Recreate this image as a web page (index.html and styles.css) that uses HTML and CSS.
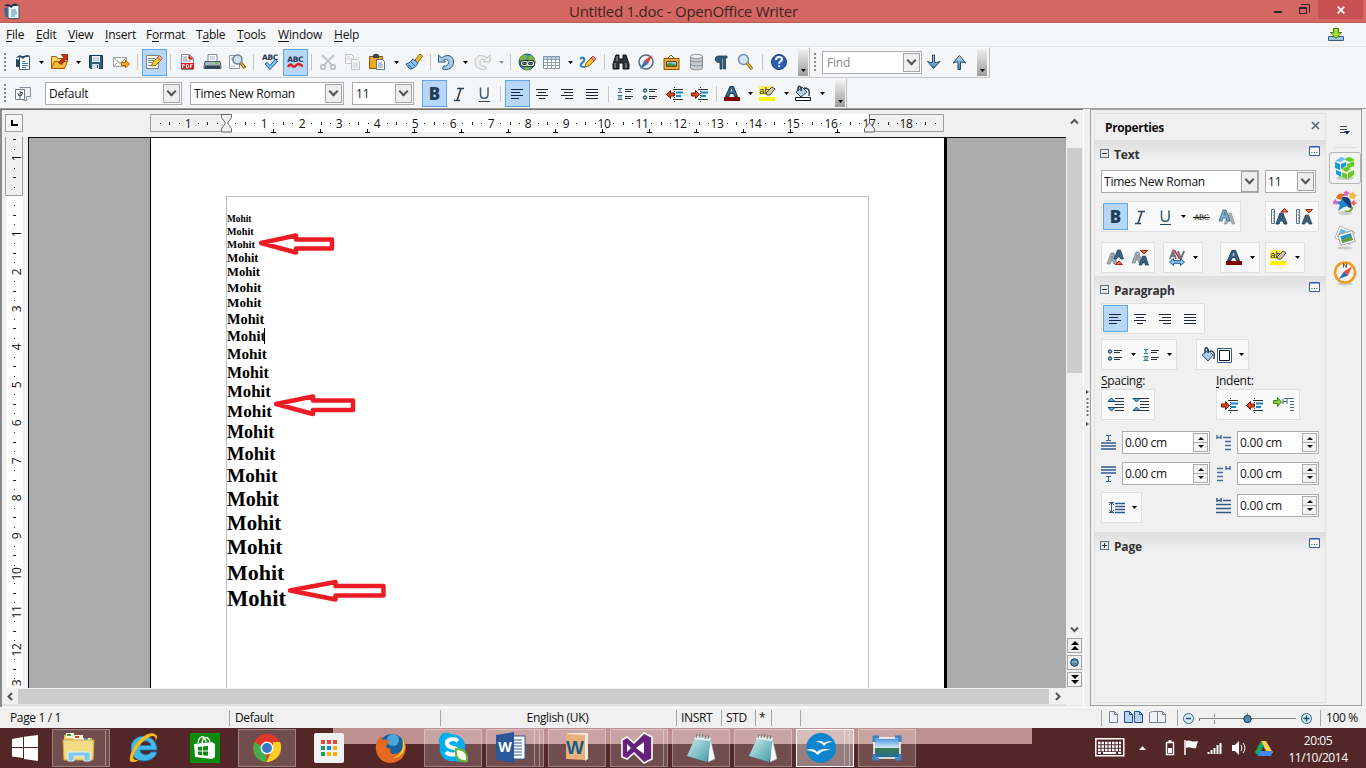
FILE: index.html
```html
<!DOCTYPE html>
<html lang="en">
<head>
<meta charset="utf-8">
<title>Untitled 1.doc - OpenOffice Writer</title>
<link rel="stylesheet" href="styles.css">
</head>
<body>
<svg class="defs" width="0" height="0">
<defs>
<linearGradient id="gBlue" x1="0" y1="0" x2="0" y2="1"><stop offset="0" stop-color="#c5e1f5"/><stop offset="1" stop-color="#3c7fb5"/></linearGradient>
<linearGradient id="gGold" x1="0" y1="0" x2="0" y2="1"><stop offset="0" stop-color="#ffe08a"/><stop offset="1" stop-color="#f0a91c"/></linearGradient>
<linearGradient id="gNote" x1="0" y1="0" x2="1" y2="1"><stop offset="0" stop-color="#d8f2f2"/><stop offset="1" stop-color="#3b9aa5"/></linearGradient>
<linearGradient id="gSky" x1="0" y1="0" x2="0" y2="1"><stop offset="0" stop-color="#3e8fd8"/><stop offset=".5" stop-color="#d8ecf8"/><stop offset=".52" stop-color="#3c7a50"/><stop offset="1" stop-color="#1d6a9c"/></linearGradient>
</defs>
<symbol id="doc" viewBox="0 0 25 24"><path d="M8.500 6.500h10v13h-10z" fill="#fff" stroke="#3c5d75"/><path d="M5 8c3-4 5-3 7-1 2-2 4-3 7-1-3 0-5 1-7 3-2-2-4-2-7-1zM5 17V9l4 1v7z" fill="#27485f"/><path d="M11 11.500h3M11 13.500h6M11 15.500h6M11 17.500h4" stroke="#4179aa"/></symbol>
<symbol id="open" viewBox="0 0 25 24"><path d="M4.500 18.500v-12h5l1 2h7v10z" fill="url(#gGold)" stroke="#a65e00"/><path d="M4.500 18.500l3-7h13l-3 7z" fill="#f8bd40" stroke="#a65e00"/><path d="M11.500 12.500l5-5-2-3h6v6l-2-1-4 5z" fill="#c8320f" stroke="#7c1900" stroke-width=".8"/></symbol>
<symbol id="save" viewBox="0 0 25 24"><path d="M5.500 5.500h13v13h-12l-1-1z" fill="#315a77" stroke="#183b55"/><path d="M8 6h8v6H8z" fill="#eef4f7"/><path d="M8 14h7v5H8z" fill="#d3e0e8"/><path d="M13 15h1v3h-1z" fill="#234"/><path d="M9 8h6M9 10h6" stroke="#9ab7c9"/></symbol>
<symbol id="mail" viewBox="0 0 25 24"><path d="M4.500 7.500h13v9h-13z" fill="#f6f6f3" stroke="#a1a69f"/><path d="M4.500 7.500l6.500 6 6.500-6M4.500 16.500l4-4M17.500 16.500l-4-4" fill="none" stroke="#969c99"/><path d="M12.500 12.500h4V10l4 4-4 4v-2.500h-4z" fill="#ffa91e" stroke="#b66400"/></symbol>
<symbol id="edit" viewBox="0 0 25 24"><path d="M4.500 5.500h12v13h-12z" fill="#fff" stroke="#788690"/><path d="M6 8.500h7M6 10.500h6M6 12.500h4M6 15.500h8" stroke="#7a8995"/><path d="M9.500 16l1-3.500 6-6 3 3-6 6z" fill="#f7c92d" stroke="#6b5107" stroke-width=".8"/><path d="M15.500 7.500l2-2 3 3-2 2z" fill="#f4a4a4" stroke="#b23d3d" stroke-width=".8"/></symbol>
<symbol id="pdf" viewBox="0 0 25 24"><path d="M6.500 4.500h8l4 4v11h-12z" fill="#fff" stroke="#7d8a94"/><path d="M14 5v4h4" fill="#d52b2b" stroke="#b51f1f"/><path d="M8 7h4M8 9h4M8 11h8" stroke="#83919c"/><path d="M6 13h13v6H6z" fill="#e3191b"/><path d="M7.500 18v-3.500h1.700v1.700H7.500M11.500 18v-3.500h1.400l.8 1v1.500l-.8 1zM15.500 18v-3.500h2M15.500 16.200h1.500" fill="none" stroke="#fff" stroke-width=".9"/></symbol>
<symbol id="print" viewBox="0 0 25 24"><path d="M8 4.500h9v9H8z" fill="#fff" stroke="#7d8c96"/><path d="M10 7h5M10 9h5" stroke="#a3b0ba"/><path d="M5 11.500h15l1 5v2H4v-2z" fill="#a9b5bd" stroke="#485a66"/><path d="M5 15.500h15v3H5z" fill="#314553"/><path d="M15 13h3" stroke="#5bc72a" stroke-width="1.500"/></symbol>
<symbol id="preview" viewBox="0 0 25 24"><path d="M4.500 5.500h10v13h-10z" fill="#fff" stroke="#87949d"/><path d="M6 8h5M6 10h3M6 16h4" stroke="#9ca8b1"/><circle cx="12.500" cy="9.500" r="4.500" fill="#cbe2f5" stroke="#6a7f90" stroke-width="1.500"/><path d="M16 13l4 5" stroke="#7b4b00" stroke-width="3"/><path d="M16 13l3.500 4.500" stroke="#f1b12f" stroke-width="1.500"/></symbol>
<symbol id="cut" viewBox="0 0 25 24"><path d="M6 5l10 10M18 5L8 15" stroke="#c3c5c7" stroke-width="2"/><circle cx="7" cy="17" r="2.200" fill="none" stroke="#bcbebf" stroke-width="1.800"/><circle cx="17" cy="17" r="2.200" fill="none" stroke="#bcbebf" stroke-width="1.800"/></symbol>
<symbol id="copy" viewBox="0 0 25 24"><path d="M4.500 4.500h6l2 2v7h-8z" fill="#f5f5f5" stroke="#c3c5c7"/><path d="M10.500 9.500h6l2 2v8h-8z" fill="#f5f5f5" stroke="#bfc1c3"/><path d="M6 7h3M6 9h5M12 13h4M12 15h5M12 17h5" stroke="#cbcdcf"/></symbol>
<symbol id="paste" viewBox="0 0 25 24"><path d="M3.500 6.500h13v12h-13z" fill="#f0a81d" stroke="#85550a"/><path d="M7 6c0-3 6-3 6 0v2H7z" fill="#37454e"/><path d="M10.500 9.500h6l2 2v8h-8z" fill="#fff" stroke="#57738a"/><path d="M12 13h4M12 15h5M12 17h5" stroke="#6c8ba3"/></symbol>
<symbol id="brush" viewBox="0 0 25 24"><path d="M13 10l5-6 2.500 2-5 7z" fill="#f7b933" stroke="#9a5d00"/><path d="M4 14c4-1 6-4 7-5l5 4c-2 4-5 6-8 6-1-1-3-3-4-5z" fill="#8bc4f2" stroke="#1f5691"/><path d="M6 15l4 3M9 12l4 4" stroke="#2a65a5"/></symbol>
<symbol id="undo" viewBox="0 0 25 24"><path d="M3.500 5v7h7l-2-2c3-1.500 5 0 5 2.500s-2 4-5 3.500l-1 3c6 1.500 11-1 11-7 0-6-6-9-12-4z" fill="#a7ccec" stroke="#2a5a87"/></symbol>
<symbol id="redo" viewBox="0 0 25 24"><path d="M19 5v7h-7l2-2c-3-1.500-5 0-5 2.500s2 4 5 3.500l1 3c-6 1.500-11-1-11-7 0-6 6-9 12-4z" fill="#ededee" stroke="#c2c4c6"/></symbol>
<symbol id="link" viewBox="0 0 25 24"><circle cx="12" cy="12" r="8" fill="#478ec4" stroke="#1c4f77"/><path d="M6 6c3-3 6-1 6 1s-4 5-6 4-2-3 0-5zM14 6c2-2 5 1 6 4s-3 4-5 2-3-4-1-6zM8 18c3-2 7-1 8 1-3 2-6 1-8-1z" fill="#7cb53a"/><rect x="6.500" y="11.500" width="6" height="4" rx="2" fill="none" stroke="#24341a" stroke-width="2.800"/><rect x="12.500" y="11.500" width="6" height="4" rx="2" fill="none" stroke="#24341a" stroke-width="2.800"/><rect x="6.500" y="11.500" width="6" height="4" rx="2" fill="none" stroke="#eef5df" stroke-width="1.200"/><rect x="12.500" y="11.500" width="6" height="4" rx="2" fill="none" stroke="#eef5df" stroke-width="1.200"/></symbol>
<symbol id="table" viewBox="0 0 25 24"><path d="M3.500 6.500h16v12h-16z" fill="#fff" stroke="#8093a3"/><path d="M4 7h15v2H4z" fill="#b9d5ef"/><path d="M4 9.500h16M4 12.500h16M4 15.500h16M7.500 6v13M11.500 6v13M15.500 6v13" stroke="#8da0b0"/></symbol>
<symbol id="draw" viewBox="0 0 25 24"><path d="M4 9c3-3 6 0 3 3s-4 5 2 5" fill="none" stroke="#2d80cc" stroke-width="2"/><path d="M9 17l1-4 6-6 3 3-6 6z" fill="#f7c22c" stroke="#6e4a00" stroke-width=".8"/><path d="M15 8l2-2 3 3-2 2z" fill="#ef8f8f" stroke="#a83a3a" stroke-width=".8"/></symbol>
<symbol id="binoc" viewBox="0 0 25 24"><path d="M7 5h3v4h4V5h3l3 9v5h-6v-6h-4v6H4v-5z" fill="#2c3136" stroke="#101315"/><path d="M6 13v5M17 13v5M8 6v5" stroke="#9ba5ad"/></symbol>
<symbol id="compass" viewBox="0 0 25 24"><circle cx="12" cy="12" r="7" fill="#eaf3fb" stroke="#566b7b" stroke-width="1.500"/><path d="M18 5l-4 9-3.500-3.500z" fill="#e8372c"/><path d="M6 19l4.500-8.500L14 14z" fill="#2e71c4"/></symbol>
<symbol id="gallery" viewBox="0 0 25 24"><path d="M8 9l4-4 4 4" fill="none" stroke="#8a5a14"/><path d="M5 8.500h15v11H5z" fill="#efae3b" stroke="#8d5200"/><path d="M7.500 11.500h10v5h-10z" fill="#8bcbf0" stroke="#704307"/><path d="M8 16v-2c3-2 5-1 9 1v1z" fill="#42963a"/></symbol>
<symbol id="db" viewBox="0 0 25 24"><path d="M6.500 6v12c0 2.500 12 2.500 12 0V6" fill="#c6cdd2" stroke="#84909a"/><ellipse cx="12.500" cy="6.500" rx="6" ry="2.200" fill="#eef1f3" stroke="#84909a"/><path d="M6.500 10c0 2.500 12 2.500 12 0M6.500 14c0 2.500 12 2.500 12 0" fill="none" stroke="#7f8b95"/></symbol>
<symbol id="para" viewBox="0 0 25 24"><path d="M18 6h-8c-5 0-5 6.500 0 6.500h1v6.500h2V8h1.500v11h2V8H18z" fill="#2e5f85" stroke="#18384f" stroke-width=".8"/></symbol>
<symbol id="zoom" viewBox="0 0 25 24"><circle cx="9.500" cy="9.500" r="5" fill="#cfe6f8" stroke="#7390a9" stroke-width="1.500"/><path d="M13 13l5 6" stroke="#8a5200" stroke-width="3"/><path d="M13 13l4.600 5.400" stroke="#f2b43a" stroke-width="1.600"/></symbol>
<symbol id="help" viewBox="0 0 25 24"><circle cx="12" cy="12" r="7.500" fill="#2b5fb5" stroke="#153a78"/><path d="M9 10c0-4 6-4 6-.8 0 2.200-2.800 2-2.800 4.500M12.200 15.300v2" fill="none" stroke="#fff" stroke-width="2"/></symbol>
<symbol id="down" viewBox="0 0 25 24"><path d="M10.500 5h2v7.500h2l3.500-1-6.500 7-6-7 3 1h2z" fill="url(#gBlue)" stroke="#274b66"/></symbol>
<symbol id="up" viewBox="0 0 25 24"><path d="M11 19.500h2.500V12h1.500l3.500 1-6-7.500L6 13l3-1h2z" fill="url(#gBlue)" stroke="#274b66"/></symbol>
<symbol id="stylist" viewBox="0 0 25 24"><path d="M8.500 5.500h11v9l-4 4h-3" fill="#eef1f3" stroke="#86939e"/><path d="M19.500 14.500h-4v4" fill="#fff" stroke="#86939e"/><path d="M4.500 7.500h9v10h-9z" fill="#fff" stroke="#6c7c88"/><path d="M6.500 12h5v-1.500H9V9M7.500 12v1.500h3V12M9 13.500V17" fill="none" stroke="#3f5260"/></symbol>
<symbol id="italic" viewBox="0 0 25 24"><path d="M10 6.500h7M7 18.500h6M14 6.500l-4 12" fill="none" stroke="#27455c" stroke-width="1.600"/></symbol>
<symbol id="under" viewBox="0 0 25 24"><path d="M8.500 5.500v7c0 5 7.500 5 7.500 0v-7" fill="none" stroke="#3c5c74" stroke-width="1.500"/><path d="M7 19.500h11" stroke="#27455c"/></symbol>
<symbol id="left" viewBox="0 0 25 24"><path d="M6 7.500h12M6 10.500h9M6 13.500h12M6 16.500h8" stroke="#1c2733"/></symbol>
<symbol id="center" viewBox="0 0 25 24"><path d="M6 7.500h12M8 10.500h8M6 13.500h12M9 16.500h6" stroke="#1c2733"/></symbol>
<symbol id="right" viewBox="0 0 25 24"><path d="M6 7.500h12M9 10.500h9M6 13.500h12M10 16.500h8" stroke="#1c2733"/></symbol>
<symbol id="just" viewBox="0 0 25 24"><path d="M6 7.500h12M6 10.500h12M6 13.500h12M6 16.500h12" stroke="#1c2733"/></symbol>
<symbol id="num" viewBox="0 0 25 24"><path d="M5 6.500h4M7 6.500v4M5 10.500h4M4.500 13.500h5M6 13.500v4M8 13.500v4M4.500 17.500h5" stroke="#3a7999"/><path d="M12 7.500h8M12 9.500h6M12 14.500h8M12 16.500h6" stroke="#26313a"/></symbol>
<symbol id="bul" viewBox="0 0 25 24"><circle cx="7" cy="8.500" r="1.700" fill="#74b5d4" stroke="#143d55"/><circle cx="7" cy="15.500" r="1.700" fill="#74b5d4" stroke="#143d55"/><path d="M11 7.500h8M11 9.500h6M11 14.500h8M11 16.500h6" stroke="#26313a"/></symbol>
<symbol id="dec" viewBox="0 0 25 24"><path d="M10 7.500h10M10 17.500h10" stroke="#28333b"/><path d="M11.500 5v15" stroke="#28333b" stroke-dasharray="1 1"/><path d="M13 10.500h7M13 14h5" stroke="#1687c8" stroke-width="2"/><path d="M3.500 12.500l4-4V11h4v3h-4v2.500z" fill="#d04a25" stroke="#791600"/></symbol>
<symbol id="inc" viewBox="0 0 25 24"><path d="M10 7.500h10M10 17.500h10" stroke="#28333b"/><path d="M12.500 5v15" stroke="#28333b" stroke-dasharray="1 1"/><path d="M13 10.500h7M13 14h5" stroke="#1687c8" stroke-width="2"/><path d="M11.500 12.500l-4-4V11h-4v3h4v2.500z" fill="#d04a25" stroke="#791600"/></symbol>
<symbol id="fontcolor" viewBox="0 0 25 24"><path d="M5.500 14.500L10 4.500h3.500l4 10h-3l-1-3h-3.500l-1 3z" fill="#366384" stroke="#1e3a50"/><path d="M10.500 9.500l1-3 1 3z" fill="#e2eaf0"/><path d="M4 15h16v4H4z" fill="#800000"/></symbol>
<symbol id="aa" viewBox="0 0 25 24"><path d="M10 19l5-11h2l4 11h-3l-1-3h-3l-1 3z" fill="#a9b0b6" stroke="#878f96" stroke-width=".6"/><path d="M5 16l4-11h3l4 11h-3l-1-3H9l-1 3zM10 10h1.500l-.7-3z" fill="#7cb0d2" stroke="#3b6482" stroke-width=".8" fill-rule="evenodd"/></symbol>
<symbol id="growA" viewBox="0 0 25 24"><path d="M4.500 4.500h3v14h-3zM6 7h2M6 10h2M6 13h2M6 16h2" fill="#eef3f7" stroke="#5c7488"/><path d="M9 19l4-11h3l4 11h-3l-1-3h-3l-1 3zM13.500 13.500h2l-1-3z" fill="#3b6484" stroke="#1e394e" stroke-width=".9" fill-rule="evenodd"/><path d="M14 7l3.500-3.500L21 7z" fill="#f26b41" stroke="#a22c0d"/></symbol>
<symbol id="shrinkA" viewBox="0 0 25 24"><path d="M4.500 4.500h3v14h-3zM6 7h2M6 10h2M6 13h2M6 16h2" fill="#eef3f7" stroke="#5c7488"/><path d="M10 19l3.500-9h3l3.500 9h-3l-.6-2h-3l-.6 2zM14.500 15h2l-1-2z" fill="#3b6484" stroke="#1e394e" stroke-width=".7" fill-rule="evenodd"/><path d="M13.500 4.500L17 8l3.500-3.500z" fill="#f26b41" stroke="#a22c0d"/></symbol>
<symbol id="supA" viewBox="0 0 25 24"><path d="M4 18l4-11h3l3 11h-3l-1-3H8l-1 3zM8.500 13h1.500l-.8-3z" fill="#a3abb1" stroke="#707d86" stroke-width=".7" fill-rule="evenodd"/><path d="M11 13l3.500-9h3l3 9h-3l-.5-2h-2.500l-.6 2zM15 9h1.600l-.8-2.500z" fill="#3b6484" stroke="#1e394e" stroke-width=".7" fill-rule="evenodd"/><path d="M12.500 18.500L16 15l3.500 3.500z" fill="#f26b41" stroke="#a22c0d"/></symbol>
<symbol id="subA" viewBox="0 0 25 24"><path d="M4 17l4-11h3l3 11h-3l-1-3H8l-1 3zM8.500 12h1.500l-.8-3z" fill="#a3abb1" stroke="#707d86" stroke-width=".7" fill-rule="evenodd"/><path d="M11 19l3.500-9h3l3 9h-3l-.5-2h-2.500l-.6 2zM15 15h1.600l-.8-2.500z" fill="#3b6484" stroke="#1e394e" stroke-width=".7" fill-rule="evenodd"/><path d="M12.500 4.500L16 8l3.500-3.500z" fill="#f26b41" stroke="#a22c0d"/></symbol>
<symbol id="kern" viewBox="0 0 25 24"><path d="M5 13l3-8 3 8M6 10h4M13 5l3 8 3-8" fill="none" stroke="#6b7780" stroke-width="2"/><path d="M9.500 4l5 9" stroke="#d81e2b" stroke-width="1.500"/><path d="M4.500 16l4-3.500v2.200h7v-2.200l4 3.500-4 3.500v-2.200h-7v2.200z" fill="#8ec6ee" stroke="#1f5c96"/></symbol>
<symbol id="bucket" viewBox="0 0 32 24"><path d="M1 12l6-5 5 5-5 6z" fill="#a9ccec" stroke="#2d5680"/><path d="M4 10V6c1-3 4-1 3 4M9 8c4 0 5 2 4 8" fill="none" stroke="#263b4a" stroke-width="1.500"/><path d="M16.500 5.500h14v14h-14z" fill="#fff" stroke="#2f5c91"/><path d="M18.500 7.500h10v10h-10z" fill="#fff" stroke="#111"/></symbol>
<symbol id="spInc" viewBox="0 0 25 24"><path d="M12 5.500h9M12 8.500h9M12 11.500h9M12 14.500h9M12 17.500h9" stroke="#26384a"/><path d="M5 8.500L8.500 5 12 8.500zM5 14.500L8.500 18l3.500-3.500z" fill="#66aadd" stroke="#17476e"/></symbol>
<symbol id="spDec" viewBox="0 0 25 24"><path d="M12 5.500h9M12 8.500h9M12 11.500h9M12 14.500h9M12 17.500h9" stroke="#26384a"/><path d="M5 5.500L8.500 9 12 5.500zM5 17.500L8.500 14l3.500 3.500z" fill="#66aadd" stroke="#17476e"/></symbol>
<symbol id="hang" viewBox="0 0 25 24"><path d="M2.500 7.500h4v-3l4 4.500-4 4.500v-3h-4z" fill="#86d34a" stroke="#3b7d12"/><path d="M12 8.500h4M12 6v5M16 6v5M13 5.500h10M19 8.500h4M19 11.500h4M19 14.500h4M19 17.500h4" stroke="#4b6a9d"/></symbol>
<symbol id="above" viewBox="0 0 16 18"><path d="M5 1.500h5M7.500 1.500v5M5 6.500h5" stroke="#3c649d"/><path d="M0 9h15M0 12h15M0 15h15" stroke="#35588a" stroke-width="1.600"/></symbol>
<symbol id="below" viewBox="0 0 16 18"><path d="M5 11.500h5M7.500 11.500v5M5 16.500h5" stroke="#3c649d"/><path d="M0 2h15M0 5h15M0 8h15" stroke="#35588a" stroke-width="1.600"/></symbol>
<symbol id="before" viewBox="0 0 16 18"><path d="M1 1v4M5 1v4M1 3.500h4M7 3.500h8M9 7.500h6M9 11.500h6M9 15.500h6" stroke="#466a9c" stroke-width="1.400"/></symbol>
<symbol id="after" viewBox="0 0 16 18"><path d="M10 1v4M14 1v4M10 3.500h4M1 3.500h6M1 7.500h6M1 11.500h6M1 15.500h6" stroke="#466a9c" stroke-width="1.400"/></symbol>
<symbol id="first" viewBox="0 0 16 18"><path d="M1 1v4M5 1v4M1 3.500h4M7 3.500h8M0 7.500h15M0 11.500h15M0 15.500h15" stroke="#35588a" stroke-width="1.500"/></symbol>
<symbol id="lsp" viewBox="0 0 25 24"><path d="M5 6.500h5M5 16.500h5M7.500 6v11" stroke="#2a5f9b"/><path d="M5 9l2.500-2.500L10 9M5 14l2.500 2.500L10 14" fill="none" stroke="#2a5f9b"/><path d="M11 7.500h10M11 10.500h10M11 13.500h10M11 16.500h10" stroke="#33598c" stroke-width="1.500"/></symbol>
<symbol id="more" viewBox="0 0 11 10"><path d="M.5.500h10v9H.5z" fill="#fff" stroke="#3b5f9e"/><path d="M1 1.500h9" stroke="#7fa8dc"/><path d="M2.500 6.500h1M5 6.500h1M7.500 6.500h1" stroke="#24457c"/></symbol>
<symbol id="notepad" viewBox="0 0 32 32"><path d="M25 5l5 22-7 3z" fill="#f5fafa" stroke="#93b3b8" stroke-width=".5"/><path d="M11 4l15 2-4 24-20-6z" fill="url(#gNote)"/><path d="M11 4l15 2-1 3-16-2z" fill="#e9f1ee"/><path d="M11 6l1-4M14 6l1-4M17 6l1-4M20 7l1-4M23 7l1-4" stroke="#6d7774"/></symbol>
<symbol id="arr" viewBox="0 0 5 3"><path d="M0 0h5L2.500 3z" fill="#000"/></symbol>
</svg>

<header class="title"><svg class="appicon" width="18" height="18"><path d="M5 3.500h11v13H5z" fill="#eef7fb" stroke="#36576b"/><path d="M1 4c3-3 5-2 7 0 2-3 5-3 7-1-3 0-5 1-7 3-2-2-4-2-7-2z" fill="#1c3b4c"/><path d="M1 6h4v9H2z" fill="#486a7d"/><path d="M8 8h5M8 10h6M8 12h6M8 14h4" stroke="#4e8db4"/></svg><span class="caption">Untitled 1.doc - OpenOffice Writer</span>
<svg class="winctl" width="62" height="23"><path d="M0 12h8" stroke="#2e2626" stroke-width="2"/><path d="M25.500 7.500h7v6h-7zM25 8.500h8" fill="none" stroke="#2e2626"/><path d="M27 4.500h8.500v8" fill="none" stroke="#2e2626"/></svg><span class="close"><svg width="8" height="8"><path d="M.7.700l6.600 6.600M7.300.700L.7 7.300" stroke="#fff" stroke-width="1.800"/></svg></span></header>

<nav class="menu"><span class="m1"><u>F</u>ile</span><span class="m2"><u>E</u>dit</span><span class="m3"><u>V</u>iew</span><span class="m4"><u>I</u>nsert</span><span class="m5">F<u>o</u>rmat</span><span class="m6">T<u>a</u>ble</span><span class="m7"><u>T</u>ools</span><span class="m8"><u>W</u>indow</span><span class="m9"><u>H</u>elp</span>
<svg class="update" width="16" height="14"><path d="M.5 8.500h15v4H.5z" fill="#9cc3df" stroke="#35607e"/><path d="M5.500.500h5v4h3L8 10.500 2.500 4.500h3z" fill="#a8d92f" stroke="#3f7d06"/></svg></nav>

<div class="bar bar1">
<div class="strip s1"><i class="grip"></i>
<i class="b"><svg><use href="#doc"/></svg></i><i class="a"><svg><use href="#arr"/></svg></i><i class="b"><svg><use href="#open"/></svg></i><i class="a wide"><svg><use href="#arr"/></svg></i><i class="b"><svg><use href="#save"/></svg></i><i class="b"><svg><use href="#mail"/></svg></i><i class="s"></i><i class="b on"><svg><use href="#edit"/></svg></i><i class="s"></i><i class="b"><svg><use href="#pdf"/></svg></i><i class="b"><svg><use href="#print"/></svg></i><i class="b"><svg><use href="#preview"/></svg></i><i class="s"></i><i class="b"><svg viewBox="0 0 25 24"><text x="12" y="9.500" class="ic-abc">ABC</text><path d="M7 14l2-1.500 3 3 5-6 2.500 2-7.500 8z" fill="#7cc4f5" stroke="#1e5b96"/></svg></i><i class="b on"><svg viewBox="0 0 25 24"><text x="12.200" y="11.500" class="ic-abc">ABC</text><path d="M5 17q2-4 4-1.500t4 0 4-1 3 1.500" fill="none" stroke="#e21b1b" stroke-width="2.400"/></svg></i><i class="s"></i><i class="b"><svg><use href="#cut"/></svg></i><i class="b"><svg><use href="#copy"/></svg></i><i class="b"><svg><use href="#paste"/></svg></i><i class="a"><svg><use href="#arr"/></svg></i><i class="b"><svg><use href="#brush"/></svg></i><i class="s"></i><i class="b"><svg><use href="#undo"/></svg></i><i class="a"><svg><use href="#arr"/></svg></i><i class="b"><svg><use href="#redo"/></svg></i><i class="a dim"><svg><use href="#arr"/></svg></i><i class="s"></i><i class="b"><svg><use href="#link"/></svg></i><i class="b"><svg><use href="#table"/></svg></i><i class="a"><svg><use href="#arr"/></svg></i><i class="b"><svg><use href="#draw"/></svg></i><i class="s"></i><i class="b"><svg><use href="#binoc"/></svg></i><i class="b"><svg><use href="#compass"/></svg></i><i class="b"><svg><use href="#gallery"/></svg></i><i class="b"><svg><use href="#db"/></svg></i><i class="b"><svg><use href="#para"/></svg></i><i class="b"><svg><use href="#zoom"/></svg></i><i class="s"></i><i class="b"><svg><use href="#help"/></svg></i>
<i class="over"><svg><use href="#arr"/></svg></i></div>
<div class="strip s2"><i class="grip"></i><span class="combo find"><em>Find</em><b></b></span><i class="b"><svg><use href="#down"/></svg></i><i class="b"><svg><use href="#up"/></svg></i><i class="over"><svg><use href="#arr"/></svg></i></div>
</div>
<div class="bar bar2">
<div class="strip s3"><i class="grip"></i><i class="b"><svg><use href="#stylist"/></svg></i><span class="combo c1"><em>Default</em><b></b></span><span class="combo c2"><em>Times New Roman</em><b></b></span><span class="combo c3"><em>11</em><b></b></span>
<i class="b on"><svg viewBox="0 0 25 24"><text x="12.500" y="18.200" class="ic-bold">B</text></svg></i><i class="b"><svg><use href="#italic"/></svg></i><i class="b"><svg><use href="#under"/></svg></i><i class="s"></i><i class="b on"><svg><use href="#left"/></svg></i><i class="b"><svg><use href="#center"/></svg></i><i class="b"><svg><use href="#right"/></svg></i><i class="b"><svg><use href="#just"/></svg></i><i class="s"></i><i class="b"><svg><use href="#num"/></svg></i><i class="b"><svg><use href="#bul"/></svg></i><i class="b"><svg><use href="#dec"/></svg></i><i class="b"><svg><use href="#inc"/></svg></i><i class="s slim"></i><i class="b"><svg><use href="#fontcolor"/></svg></i><i class="a"><svg><use href="#arr"/></svg></i><i class="b"><svg viewBox="0 0 25 24"><path d="M3 4h12v9H3z" fill="#fff34d"/><text x="8.500" y="11.500" class="ic-ab">ab</text><path d="M11 13l-1-2 6-6 3 2-5 6z" fill="#c9c4a7" stroke="#4f4c3c"/><path d="M3 15h16v4H3z" fill="#fff600"/></svg></i><i class="a"><svg><use href="#arr"/></svg></i><i class="b"><svg viewBox="0 0 25 24"><path d="M4 10l6-5 5 5-6 5z" fill="#b4d1e8" stroke="#29475d"/><path d="M6 9V6c1-3 4-2 3 3M12 6c5 0 6 3 5 8" fill="none" stroke="#263b4a" stroke-width="1.500"/><path d="M3.500 15.500h15v3h-15z" fill="#fff" stroke="#111"/></svg></i><i class="a"><svg><use href="#arr"/></svg></i>
<i class="over"><svg><use href="#arr"/></svg></i></div>
</div>

<main class="work">
<section class="editor">
<div class="top"><span class="corner"><svg width="7" height="6"><path d="M1 0v5h6" fill="none" stroke="#000" stroke-width="2"/></svg></span><svg id="hruler" width="800" height="26"></svg></div>
<div class="mid"><svg id="vruler" width="26" height="551"></svg>
<div class="canvas"><div class="page"><div class="frame">
<p class="l1">Mohit</p><p class="l2">Mohit</p><p class="l3">Mohit</p><p class="l4">Mohit</p><p class="l5">Mohit</p><p class="l6">Mohit</p><p class="l7">Mohit</p><p class="l8">Mohit</p><p class="l9">Mohit</p><p class="l10">Mohit</p><p class="l11">Mohit</p><p class="l12">Mohit</p><p class="l13">Mohit</p><p class="l14">Mohit</p><p class="l15">Mohit</p><p class="l16">Mohit</p><p class="l17">Mohit</p><p class="l18">Mohit</p><p class="l19">Mohit</p><p class="l20">Mohit</p><p class="l21">Mohit</p>
<svg class="marks" width="200" height="430"><g fill="none" stroke="#ed1c24" stroke-width="4.500" stroke-linejoin="round"><path d="M35 47L70 39.500V43.500h36v9H70v4z"/><path d="M50 208L87 200.500v4h40v9.500H87v4z"/><path d="M64 394.500L109.500 386v4h48v9.500h-48v4z"/></g><path d="M38.500 132v16" stroke="#000"/></svg>
</div></div></div></div>
<div class="hscroll"><svg width="16" height="16"><path d="M10 4L6.500 7.500 10 11" fill="none" stroke="#555" stroke-width="2"/></svg><i></i><svg width="17" height="16"><path d="M7 4l3.500 3.500L7 11" fill="none" stroke="#555" stroke-width="2"/></svg></div>
</section>
<div class="vscroll"><svg width="15" height="36"><path d="M4 11.500L7.500 8l3.500 3.500" fill="none" stroke="#555" stroke-width="2"/></svg><i></i><span></span><svg width="15" height="16"><path d="M4 5.500L7.500 9 11 5.500" fill="none" stroke="#555" stroke-width="2"/></svg>
<b><svg width="8" height="10"><path d="M4 0l4 4H0zM4 5l4 4H0z"/></svg></b><b><svg width="9" height="9"><circle cx="4.500" cy="4.500" r="3.800" fill="#548bad" stroke="#1b3d56"/><path d="M2 4h5" stroke="#a3cbe2"/></svg></b><b><svg width="8" height="10"><path d="M4 4L0 0h8zM4 9L0 5h8z"/></svg></b></div>
<div class="split"><svg width="4" height="36"><path d="M0 0l3 2-3 2zM0 32l3 2-3 2z" fill="#555"/><path d="M1.500 8v20" stroke="#777" stroke-width="2" stroke-dasharray="2 2"/></svg></div>
<aside class="side">
<div class="deck">
<h1>Properties<svg width="9" height="9"><path d="M1 1l7 7M8 1L1 8" stroke="#5b6775" stroke-width="1.700"/></svg></h1>
<h2><i class="tog"></i>Text<svg class="more"><use href="#more"/></svg></h2>
<div class="row r1"><span class="combo d1"><em>Times New Roman</em><b></b></span><span class="combo d2"><em>11</em><b></b></span></div>
<div class="row r2"><div class="box w139"><i class="b on"><svg viewBox="0 0 25 24"><text x="12.500" y="18.200" class="ic-bold">B</text></svg></i><i class="b"><svg><use href="#italic"/></svg></i><i class="b"><svg><use href="#under"/></svg></i><i class="a"><svg><use href="#arr"/></svg></i><i class="b"><svg viewBox="0 0 25 24"><text x="12.500" y="14.800" class="ic-abc strike">ABC</text><path d="M4 12.500h17" stroke="#222"/></svg></i><i class="b"><svg><use href="#aa"/></svg></i></div><div class="box gap25"><i class="b"><svg><use href="#growA"/></svg></i><i class="b"><svg><use href="#shrinkA"/></svg></i></div></div>
<div class="row r3"><div class="box"><i class="b"><svg><use href="#supA"/></svg></i><i class="b"><svg><use href="#subA"/></svg></i></div><div class="box gap8"><i class="b"><svg><use href="#kern"/></svg></i><i class="a"><svg><use href="#arr"/></svg></i></div><div class="box gap17"><i class="b"><svg><use href="#fontcolor"/></svg></i><i class="a"><svg><use href="#arr"/></svg></i></div><div class="box gap5"><i class="b"><svg viewBox="0 0 25 24"><path d="M3 4h12v9H3z" fill="#fff34d"/><text x="8.500" y="11.500" class="ic-ab">ab</text><path d="M11 13l-1-2 6-6 3 2-5 6z" fill="#c9c4a7" stroke="#4f4c3c"/><path d="M3 15h16v4H3z" fill="#fff600"/></svg></i><i class="a"><svg><use href="#arr"/></svg></i></div></div>
<h2><i class="tog"></i>Paragraph<svg class="more"><use href="#more"/></svg></h2>
<div class="row r4"><div class="box"><i class="b on"><svg><use href="#left"/></svg></i><i class="b"><svg><use href="#center"/></svg></i><i class="b"><svg><use href="#right"/></svg></i><i class="b"><svg><use href="#just"/></svg></i></div></div>
<div class="row r5"><div class="box"><i class="b"><svg><use href="#bul"/></svg></i><i class="a"><svg><use href="#arr"/></svg></i><i class="b"><svg><use href="#num"/></svg></i><i class="a"><svg><use href="#arr"/></svg></i></div><div class="box gap20"><i class="b b38"><svg class="w32"><use href="#bucket"/></svg></i><i class="a"><svg><use href="#arr"/></svg></i></div></div>
<div class="row r6"><span><u>S</u>pacing:</span><span><u>I</u>ndent:</span></div>
<div class="row r7"><div class="box"><i class="b"><svg><use href="#spInc"/></svg></i><i class="b"><svg><use href="#spDec"/></svg></i></div><div class="box gap61"><i class="b"><svg><use href="#inc"/></svg></i><i class="b"><svg><use href="#dec"/></svg></i><i class="b b29"><svg><use href="#hang"/></svg></i></div></div>
<div class="row r8"><svg class="lab"><use href="#above"/></svg><span class="spin s87">0.00 cm<b></b></span><svg class="lab lab2"><use href="#before"/></svg><span class="spin">0.00 cm<b></b></span></div>
<div class="row r9"><svg class="lab"><use href="#below"/></svg><span class="spin s87">0.00 cm<b></b></span><svg class="lab lab2"><use href="#after"/></svg><span class="spin">0.00 cm<b></b></span></div>
<div class="row r10"><div class="box"><i class="b b27"><svg><use href="#lsp"/></svg></i><i class="a"><svg><use href="#arr"/></svg></i></div><svg class="lab lab3"><use href="#first"/></svg><span class="spin">0.00 cm<b></b></span></div>
<h2 class="pg"><i class="tog plus"></i>Page<svg class="more"><use href="#more"/></svg></h2>
</div>
<div class="tabs">
<svg width="10" height="10"><path d="M0 1.500h7M0 4.500h7M0 7.500h5" stroke="#3d4a5b" stroke-width="1.200"/><path d="M4 6h6L7 9.500z" fill="#18233a"/></svg>
<hr>
<i class="tab sel"><svg width="24" height="26"><ellipse cx="12" cy="23" rx="9" ry="2" fill="#ccc"/><path d="M2 6l6-4 5 2-6 3z" fill="#5cc0f5"/><path d="M2 7l5 2v6l-5-2zM8 9l5-2v4l-5 3zM3 15l5 2v5l-5-3z" fill="#159be5"/><path d="M13 3l4-1 5 3-5 2-5-2zM14 9l7-3v5l-7 3zM9 17l5 2v5l-5-2zM15 18l6-3v5l-6 4zM8 14l5-2 5 2-5 3z" fill="#67ce20"/></svg></i>
<i class="tab"><svg width="24" height="26"><ellipse cx="12" cy="23" rx="7" ry="2" fill="#ccc"/><path d="M3 8c1-5 7-6 10-2-4 0-5 1-5 4z" fill="#dc7429"/><path d="M8 8c5-3 10 0 10 6l2 5-5-2z" fill="#153f70"/><path d="M8 9l8 7-5 1-6 4 2-6-5-3 6-1z" fill="#1e84ce"/><path d="M11 20c4 2 8 0 7-5 4 4 1 8-5 7z" fill="#72a32d"/><path d="M13.500 0l1 2 2 .5-1.500 2v2l-2-1-2 .5.500-2-1-2 2-.5zM2.500 9l1 2 2 .5-1.500 2v1.500l-2-1-2 .5.500-2-1-1.500 2-.5z" fill="#dc61c8"/><path d="M20 1l1 3 3 1-2 2v3l-3-2-3 1 1-3-1-3h3z" fill="#f0bd35"/><path d="M21 10l1 2 2 1-2 1-1 2-2-2-2-1 2-1z" fill="#f05b67"/></svg></i>
<i class="tab"><svg width="24" height="26"><ellipse cx="12" cy="23" rx="8" ry="1.500" fill="#ccc"/><g transform="rotate(23 12 12)"><path d="M3 4h16v13H3z" fill="#fff" stroke="#b7b7b7"/><path d="M5 6h12v9H5z" fill="#64b7e4"/><path d="M5 15v-4c4-4 7 4 12-1v5z" fill="#6c9d3a"/></g><g transform="rotate(-16 12 13)"><path d="M6 8h15v11H6z" fill="#fff" stroke="#aaa"/><path d="M8 10h11v7H8z" fill="#2595cc"/><path d="M8 17v-3c4 0 7-3 11 1v2z" fill="#689e35"/></g></svg></i>
<i class="tab"><svg width="24" height="26"><ellipse cx="12" cy="24" rx="8" ry="1.500" fill="#ccc"/><circle cx="12" cy="12.500" r="10" fill="#f6f3ed" stroke="#f19a1d" stroke-width="2.500"/><path d="M19 6.500l-4 9-4-4z" fill="#e85034"/><path d="M6 19l5-7.500 4 4z" fill="#286aad"/><path d="M10.500 7.500v-4l3 4v-4" fill="none" stroke="#444" stroke-width=".9"/></svg></i>
</div>
</aside>
</main>

<footer class="status"><span class="t1">Page 1 / 1</span><span class="t2">Default</span><span class="t3">English (UK)</span><span class="t4">INSRT</span><span class="t5">STD</span><span class="t6">*</span><span class="t7"></span><span class="t8"></span>
<span class="t9"><svg width="66" height="14"><g fill="#eef2f6" stroke="#7c8795"><path d="M2.500 1.500h5l3 3v8h-8zM7.500 1.500v3h3"/><path d="M42.500 2.500l3-1h5v11h-8zM50.500 1.500h5l3 3v8h-8zM55.500 1.500v3h3"/></g><path d="M17.500 1.500h5l3 3v8h-8zM22.500 1.500v3h3M27.500 1.500h5l3 3v8h-8zM32.500 1.500v3h3" fill="#b9d2f3" stroke="#1e4c8d"/></svg></span>
<span class="t10"><svg width="138" height="18"><path d="M16 8.500h97M31.500 4v3M31.500 10v4M64.500 3v3" stroke="#858585"/><path d="M16.500 8v3" stroke="#777"/><circle cx="5.500" cy="8.500" r="5" fill="#d3eaf8" stroke="#2f6689"/><circle cx="123.500" cy="8.500" r="5" fill="#d3eaf8" stroke="#2f6689"/><path d="M3 8.500h5M120.500 8.500h6M123.500 5.500v6" stroke="#174c70" stroke-width="1.400"/><circle cx="64.500" cy="9" r="3.700" fill="#5087a9" stroke="#173b55"/></svg></span><span class="t11">100 %</span></footer>

<footer class="task">
<i class="tk start"><svg width="26" height="26"><path d="M0 4l11-2v10H0zM12 1.800L26 0v12H12zM0 13h11v10L0 21.500zM12 13h14v13l-14-2z" fill="#fff"/></svg></i>
<i class="tk run x2 exp"><svg width="34" height="32"><path d="M2 3h10l2 3h16v22H2z" fill="#e8ca69"/><path d="M4 1h8v5H4zM11 3h10v5H11zM19 6h9v4h-9z" fill="#fff8df"/><path d="M5 2h4v2H5z" fill="#1cae45"/><path d="M13 4h4v2h-4z" fill="#dd4528"/><path d="M22 6h4v2h-4z" fill="#2991da"/><path d="M1 8h31l-1 20H2z" fill="#f4dc85" stroke="#d1a841"/><path d="M6 29V20h22v9h-6v-5h-10v5z" fill="#83c7e8" stroke="#d9f2fd"/></svg></i>
<i class="tk ie"><svg width="32" height="32"><path d="M30 18H13c1 6 9 6 11 2h6c-4 13-26 12-26-4S30 0 30 18zm-6-4.500c-1-6-10-6-11 0z" fill="#42b8ed" stroke="#1777b4" stroke-width=".8"/><path d="M29 3c-5-5-16 2-22 12C2 24 1 31 6 30c3 0 5-2 7-3-5 2-9 1-5-7C13 11 24 1 28 5c1 1 1 3 0 5 2-3 3-6 1-7z" fill="#f4bd17"/></svg></i>
<i class="tk store"><svg width="30" height="30"><path d="M0 0h30v30H0z" fill="#0b8b0b"/><path d="M4 11l18-2v17L5 24zM22 9l3 2v13l-3 2z" fill="#fff"/><path d="M8 10c1-7 6-9 8-1M12 10c1-7 6-7 8-1" fill="none" stroke="#fff" stroke-width="1.500"/><path d="M8 14l4-.5v4H8zM13 13.400l5-.6v4.700h-5zM8 18.500h4v3.700l-4-.4zM13 18.500h5v4.300l-5-.5z" fill="#0b8b0b"/></svg></i>
<i class="tk run chr"><svg width="30" height="30"><circle cx="15" cy="15" r="14" fill="#e2362d"/><path d="M2.500 9L15 16l-1 13C3 28-1 17 2.500 9z" fill="#48ac4c"/><path d="M14 29l7-13V9h7c4 10-3 20-14 20z" fill="#fdcf25"/><circle cx="15" cy="15" r="6.500" fill="#fff"/><circle cx="15" cy="15" r="5" fill="#3b79c4"/></svg></i>
<i class="tk apps"><svg width="30" height="30"><rect width="30" height="30" rx="2" fill="#f1f1f1"/><path d="M7 7h4v4H7zM13 7h4v4h-4zM19 7h4v4h-4z" fill="#e8453c"/><path d="M7 13h4v4H7zM7 19h4v4H7z" fill="#19a05e"/><path d="M13 13h4v4h-4z" fill="#1686e6"/><path d="M19 13h4v4h-4zM13 19h4v4h-4zM19 19h4v4h-4z" fill="#f9ae13"/></svg></i>
<i class="tk ff"><svg width="32" height="32"><circle cx="17" cy="15" r="13" fill="#1761a3"/><circle cx="18" cy="8" r="6" fill="#4aa6d8"/><path d="M28 5c6 9 3 25-12 26C4 31-2 19 2 9c0 0 2-3 4-5l1 4c4-1 6 0 7 2l-3 4 1 2 4 1c-3 5 3 6 7 4 7-3 8-9 5-16z" fill="#e56a20"/><path d="M27 5c6 10 2 21-9 21 10-4 11-13 9-21z" fill="#f8c72c"/></svg></i>
<i class="tk run sky"><svg width="32" height="32"><path d="M5 2c3-2 7-1 9 0 10 0 16 8 14 16 4 8-3 14-10 11C8 31 1 23 3 13 1 9 2 4 5 2z" fill="#00aff0"/><path d="M21 9c-5-4-12-1-11 3 1 5 11 3 11 7 0 4-8 5-12 1" fill="none" stroke="#fff" stroke-width="4"/><path d="M19 17c8 0 12 4 11 12-8 1-12-3-11-12z" fill="#fff" stroke="#67b62e" stroke-width="2"/></svg></i>
<i class="tk run x3 word"><svg width="32" height="32"><path d="M15 4h15v23H15z" fill="#fff" stroke="#2b5797"/><path d="M19 8h8M19 11h8M19 14h8M19 17h8M19 20h8M19 23h8" stroke="#2b5797"/><path d="M1 3l18-3v31L1 28z" fill="#2b579a"/><text x="10" y="20" class="wl">W</text></svg></i>
<i class="tk run wbk"><svg width="28" height="32"><path d="M3 2l19 1v25L3 27z" fill="#eab07c"/><path d="M22 3l3-2v26l-3 2zM3 2l3-1 19 0-3 2z" fill="#f4eadc"/><text x="12" y="22" class="wb">W</text></svg></i>
<i class="tk run x2 vs"><svg width="32" height="32"><path d="M23 1l8 4v22l-8 4-10-10-7 6-5-2V8l5-3 7 6z" fill="#68217a" stroke="#fff" stroke-width="1.600"/><path d="M6 12v8l4-4zM15 16l8 6V10z" fill="#fff"/></svg></i>
<i class="tk run np"><svg width="32" height="32"><use href="#notepad"/></svg></i>
<i class="tk run np"><svg width="32" height="32"><use href="#notepad"/></svg></i>
<i class="tk run x3 oo"><svg width="30" height="30"><circle cx="15" cy="15" r="15" fill="#0f85cd"/><path d="M0 17c5-2 9-1 11 2 3-3 8-4 14-2-6 0-10 1-13 5-3-3-6-4-12-5zM10 9c4-2 7-1 8 1 3-2 6-2 9-1-4 0-7 1-9 4-2-3-4-4-8-4z" fill="#fff"/></svg></i>
<i class="tk run pic"><svg width="30" height="26"><path d="M2 3h26v20H2z" fill="url(#gSky)" stroke="#fff" stroke-width="1.500"/><path d="M2 7V2h5M23 2h5v5M28 19v5h-5M7 24H2v-5" fill="none" stroke="#3d83c2" stroke-width="3"/></svg></i>
<svg class="tray" width="180" height="30"><g fill="none" stroke="#fff"><path d="M.8 5.800h28v17H.8z" stroke-width="1.500"/><path d="M3 10h23M3 13.500h23M3 17h23" stroke-width="2.500" stroke-dasharray="2.500 1"/><path d="M3 20h3M8 20h13M23 20h3" stroke-width="2"/><path d="M71.500 9.500h7v12h-7zM73.500 8h3" stroke-width="1.400"/><path d="M73 15h4v5h-4z" fill="#fff" stroke="none"/><path d="M90 7v15" stroke-width="1.500"/><path d="M91 8c4-2 5 2 12 0l-2 7c-5 1-6-2-10 0z" fill="#fff" stroke="none"/><path d="M113.500 21v-2M116.500 21v-4M119.500 21v-6M122.500 21v-9M125.500 21V10" stroke-width="2"/><path d="M137 12h3l4-4v14l-4-4h-3z" fill="#fff" stroke="none"/><path d="M146 12q2 3 0 6M148 10q4 5 0 10"/></g><path d="M44 17l3.500-4 3.500 4z" fill="#fff"/><path d="M166 8h5l7 12h-6z" fill="#ffd04b"/><path d="M166 8l3 5-6 10-3-4z" fill="#13a765"/><path d="M165 18h13l-2 5h-13z" fill="#4387ed"/></svg>
<span class="clock">20:05<br>11/10/2014</span>
</footer>
<script src="rulers.js"></script>
</body>
</html>
```
FILE: rulers.js
```js
// Builds the centimetre scales along the top and left edges of the document.
const NS = 'http://www.w3.org/2000/svg';
const CM = 37.8;
function add(parent, tag, attrs, text) {
  const el = document.createElementNS(NS, tag);
  for (const k in attrs) el.setAttribute(k, attrs[k]);
  if (text !== undefined) el.textContent = text;
  parent.appendChild(el);
}
const h = document.getElementById('hruler');
add(h, 'path', { d: 'M76 4h643v18H76z', fill: '#fff' });
add(h, 'path', { d: 'M76 4.500H.5v17H76M719 4.500h74.500v17H719', fill: 'none', stroke: '#9d9d9d' });
for (let q = -7; q <= 75; q++) {
  const x = Math.round(76 + q * CM / 4);
  if (q === 0) continue;
  if (q % 4 === 0) add(h, 'text', { x: x, y: 18, class: 'rn' }, Math.abs(q / 4));
  else if (q % 2 === 0) add(h, 'path', { d: `M${x + .5} 12v3`, stroke: '#222' });
  else add(h, 'path', { d: `M${x + .5} 13v1`, stroke: '#222' });
}
for (let i = 1; i <= 13; i++) {
  const x = Math.round(76 + i * 47) + .5;
  add(h, 'path', { d: `M${x} 19v3M${x - 2.5} 22.500h5`, stroke: '#000', fill: 'none' });
}
add(h, 'path', { d: 'M71.500 4.500h10v3l-4 5.500 4 5.500v3.500h-10V18.500l4-5.500-4-5.500z', fill: '#f0f0f0', stroke: '#666' });
add(h, 'path', { d: 'M719.500 4v9l5 5.500V22h-10v-3.500l5-5.500', fill: '#f0f0f0', stroke: '#666' });

const v = document.getElementById('vruler');
add(v, 'path', { d: 'M4 59h17v493H4z', fill: '#fff' });
add(v, 'path', { d: 'M3.500 0v58.500h17V0', fill: 'none', stroke: '#9d9d9d' });
for (let q = -6; q <= 52; q++) {
  const y = Math.round(59 + q * CM / 4);
  if (q === 0) continue;
  if (q === 52) add(v, 'text', { transform: `translate(19 ${y - 4}) rotate(-90)`, class: 'rn' }, '3');
  else if (q % 4 === 0) add(v, 'text', { transform: `translate(19 ${y}) rotate(-90)`, class: 'rn' }, Math.abs(q / 4));
  else if (q % 2 === 0) add(v, 'path', { d: `M11 ${y + .5}h3`, stroke: '#222' });
  else add(v, 'path', { d: `M12 ${y + .5}h1`, stroke: '#222' });
}
```
FILE: styles.css
```css
* { box-sizing: border-box; }
html, body { margin: 0; }
body { width: 1366px; height: 768px; overflow: hidden; background: #f0f0f0; font: 12px "Open Sans", "Noto Sans", sans-serif; color: #111; display: flex; flex-direction: column; }
svg { display: block; flex: none; }
.defs { position: absolute; }
i, em { font-style: normal; }
u { text-underline-offset: 2px; }

.title { height: 23px; flex: none; background: #d46762; border-bottom: 1px solid #b65a55; display: flex; align-items: flex-start; }
.appicon { margin: 2px 0 0 3px; }
.caption { margin-left: 548px; width: 230px; font-size: 15px; line-height: 22px; letter-spacing: -.26px; color: #3c2423; white-space: nowrap; }
.winctl { margin-left: 475px; width: 41px; }
.close { width: 45px; height: 19px; background: #c75050; margin-left: auto; margin-right: 3px; display: flex; align-items: center; justify-content: center; }

.menu { height: 24px; flex: none; background: #f5f6f7; border-bottom: 1px solid #e6e7e9; display: flex; padding-left: 6px; line-height: 23px; letter-spacing: -.2px; white-space: nowrap; }
.m1 { width: 30px; } .m2 { width: 32px; } .m3 { width: 37px; } .m4 { width: 41px; } .m5 { width: 50px; } .m6 { width: 41px; } .m7 { width: 41px; } .m8 { width: 56px; } .m9 { width: 30px; }
.update { margin: 5px 22px 0 auto; }

.bar { height: 31px; flex: none; background: #f5f6f7; display: flex; }
.bar2 { height: 31px; border-bottom: 1px solid #9c9c9c; }
.strip { height: 31px; display: flex; align-items: center; border-top: 1px solid #fff; border-bottom: 1px solid #c5c6c8; border-right: 1px solid #bcbdbf; flex: none; }
.s1 { width: 810px; padding-bottom: 1px; } .s2 { width: 180px; padding-bottom: 1px; } .s3 { width: 847px; height: 30px; border-bottom: 0; }
.grip { width: 2px; height: 19px; margin: 0 5px 0 4px; background: repeating-linear-gradient(#888 0 2px, transparent 2px 4px); flex: none; }
.s2 .grip { margin-right: 6px; }
.b { width: 25px; height: 27px; flex: none; display: flex; align-items: center; justify-content: center; }
.b svg { width: 25px; height: 24px; flex: none; }
.b svg.w32 { width: 32px; }
.on { background: #b7d7f8; border: 1px solid #62a5e7; }
.a { width: 11px; flex: none; display: flex; justify-content: center; }
.a svg, .over svg { width: 5px; height: 3px; }
.a.wide { width: 12px; } .dim { opacity: .4; }
.s { width: 8px; height: 16px; background: linear-gradient(#c3c5c8, #c3c5c8) 3px 0 / 1px 100% no-repeat; flex: none; }
.slim { width: 7px; }
.over { width: 10px; height: 27px; margin-left: auto; background: linear-gradient(#f0f0f0, #9c9c9c); display: flex; align-items: flex-end; justify-content: center; padding-bottom: 4px; flex: none; margin-right: 1px; }
.combo { height: 23px; background: #fff; border: 1px solid #abadb3; display: flex; align-items: center; flex: none; padding-left: 3px; white-space: nowrap; letter-spacing: -.22px; }
.combo b { width: 17px; height: 19px; margin: 0 1px 0 auto; border: 1px solid #a4a4a4; background: #eee; display: flex; align-items: center; justify-content: center; }
.combo b::before { content: ""; width: 5px; height: 5px; border: solid #555; border-width: 0 2px 2px 0; transform: translateY(-2px) rotate(45deg); }
.find { width: 100px; color: #888; padding-left: 4px; }
.s2 .over { margin-right: 2px; }
.c1 { width: 137px; margin-left: 9px; } .c2 { width: 154px; margin-left: 8px; } .c3 { width: 62px; margin: 0 8px; }
.ic-abc { font: bold 7.500px "DejaVu Sans", sans-serif; letter-spacing: -.3px; text-anchor: middle; fill: #1e3a50; }
.strike { font-weight: 400; fill: #222; }
.ic-ab { font: 9.500px "Liberation Sans", sans-serif; text-anchor: middle; fill: #222; }
.ic-bold { font: 800 17px "Open Sans", sans-serif; text-anchor: middle; fill: #1f3f57; }

.work { flex: 1; min-height: 0; display: flex; }
.editor { width: 1066px; flex: none; border-left: 2px solid #8b8b8b; border-top: 1px solid #707070; display: flex; flex-direction: column; }
.top { height: 27px; display: flex; flex: none; }
.corner { width: 18px; height: 18px; margin: 4px 127px 0 3px; border: 1px solid #a0a0a0; background: #f6f6f6; display: flex; align-items: center; justify-content: center; flex: none; }
.rn { font: 12px "Open Sans", sans-serif; text-anchor: middle; letter-spacing: -.3px; fill: #111; }
.mid { height: 551px; display: flex; flex: none; }
.canvas { width: 1038px; height: 551px; border: 1px solid #111; border-right: 0; border-bottom: 0; background: #ababab; overflow: hidden; flex: none; }
.page { width: 797px; height: 560px; margin-left: 121px; background: #fff; border-left: 1px solid #000; border-right: 3px solid #000; padding: 58px 0 0 75px; }
.frame { position: relative; width: 643px; height: 520px; border: 1px solid #c0c0c0; padding-top: 17px; }
.frame p { margin: 0; font-family: "Liberation Serif", serif; font-weight: bold; color: #000; }
.l1 { font-size: 9.400px; line-height: 11px; } .l2 { font-size: 10.200px; line-height: 13px; } .l3 { font-size: 10.800px; line-height: 13px; } .l4 { font-size: 12px; line-height: 14px; } .l5 { font-size: 12.600px; line-height: 15px; } .l6 { font-size: 13.200px; line-height: 15px; } .l7 { font-size: 13.200px; line-height: 15px; } .l8 { font-size: 14.300px; line-height: 18px; } .l9 { font-size: 14.700px; line-height: 17px; } .l10 { font-size: 15.300px; line-height: 18px; } .l11 { font-size: 16px; line-height: 19px; } .l12 { font-size: 16.800px; line-height: 20px; } .l13 { font-size: 17.200px; line-height: 20px; } .l14 { font-size: 18.100px; line-height: 21px; } .l15 { font-size: 18.500px; line-height: 22px; } .l16 { font-size: 19.300px; line-height: 22px; } .l17 { font-size: 19.900px; line-height: 24px; } .l18 { font-size: 20.800px; line-height: 24px; } .l19 { font-size: 21.200px; line-height: 25px; } .l20 { font-size: 22px; line-height: 25px; } .l21 { font-size: 22.600px; line-height: 28px; }
.marks { position: absolute; left: -1px; top: -1px; }
.hscroll { height: 18px; border-bottom: 2px solid #e2e2e2; display: flex; background: #f0f0f0; padding-top: 1px; flex: none; }
.hscroll i { width: 1031px; height: 15px; background: #cdcdcd; }

.vscroll { width: 17px; padding: 2px 1px 18px; flex: none; display: flex; flex-direction: column; border-top: 1px solid #707070; }
.vscroll > i { height: 225px; background: #cdcdcd; }
.vscroll span { flex: 1; }
.vscroll b { width: 15px; height: 15px; border: 1px solid #a6a6a6; margin-bottom: 2px; display: flex; align-items: center; justify-content: center; }
.split { width: 7px; flex: none; border-left: 1px solid #fff; display: flex; align-items: center; padding-left: 2px; }
.side { width: 272px; height: 597px; border: 1px solid #a0a0a0; display: flex; flex: none; padding: 3px 0 0 3px; }
.deck { width: 232px; height: 590px; border: 1px solid #e2e2e2; flex: none; }
.deck h1 { margin: 0; height: 26px; padding-left: 10px; font: bold 12px/28px "Open Sans", sans-serif; letter-spacing: -.35px; display: flex; }
.deck h1 svg { margin: 7px 5px 0 auto; }
.deck h2 { margin: 0; height: 30px; padding: 0 5px 0 5px; font: bold 12px/30px "Open Sans", sans-serif; letter-spacing: -.2px; color: #333; background: linear-gradient(#dedede, #f0f0f0 20px); display: flex; }
.deck h2.pg { height: 28px; }
.tog { width: 9px; height: 9px; border: 1px solid #5d7185; margin: 9px 5px 0 0; background: linear-gradient(#333, #333) 1px 3px / 5px 1px no-repeat; }
.tog.plus { background: linear-gradient(#333, #333) 1px 3px / 5px 1px no-repeat, linear-gradient(#333, #333) 3px 1px / 1px 5px no-repeat; }
.more { width: 11px; height: 10px; margin: 6px 0 0 auto; }
.row { display: flex; padding-left: 6px; align-items: flex-start; }
.r1 { height: 31px; padding-top: 0; } .r2 { height: 41px; } .r3 { height: 34px; } .r4 { height: 36px; } .r5 { height: 35px; } .r6 { height: 15px; line-height: 13px; letter-spacing: -.3px; } .r7 { height: 42px; } .r8 { height: 31px; } .r9 { height: 30px; } .r10 { height: 40px; }
.r4 { margin-top: -3px; }
.d1 { width: 158px; } .d2 { width: 51px; margin-left: 6px; }
.d1, .d2 { padding-left: 2px; }
.d1 b { margin-right: 0; height: 21px; }
.box { height: 31px; border: 1px solid #e0e0e0; background: #f9f9f9; display: flex; align-items: center; padding: 0 1px; flex: none; }
.w139 { width: 140px; }
.gap25 { margin-left: 24px; } .gap8 { margin-left: 8px; } .gap17 { margin-left: 17px; } .gap5 { margin-left: 5px; } .gap20 { margin-left: 19px; } .gap61 { margin-left: 61px; }
.b38 { width: 38px; } .b29 { width: 30px; } .b27 { width: 26px; }
.r6 span { width: 115px; flex: none; }
.lab { width: 16px; height: 18px; margin: 3px 5px 0 0; }
.lab2 { margin-left: 6px; margin-right: 5px; }
.lab3 { margin: 5px 5px 0 74px; }
.spin { width: 82px; height: 23px; border: 1px solid #abadb3; background: #fff; display: flex; line-height: 21px; padding-left: 2px; letter-spacing: -.25px; white-space: nowrap; flex: none; }
.r10 .spin { margin-top: 2px; }
.s87 { width: 88px; }
.spin b { position: relative; width: 15px; height: 19px; margin: 1px 1px 0 auto; border: 1px solid #acacac; background: linear-gradient(transparent 8px, #acacac 8px 9px, transparent 9px) #f3f3f3; }
.spin b::before, .spin b::after { content: ""; position: absolute; left: 4px; border: solid transparent; border-width: 0 3px 3px; border-bottom-color: #111; top: 3px; }
.spin b::after { top: 11px; border-width: 3px 3px 0; border-top-color: #111; }
.tabs { width: 36px; display: flex; flex-direction: column; align-items: center; padding: 12px 0 0 3px; }
.tabs hr { width: 23px; margin: 12px 0 4px; border: 0; border-top: 1px solid #ddd; }
.tab { width: 32px; height: 32px; margin-bottom: 3px; display: flex; align-items: center; justify-content: center; flex: none; }
.sel { border: 1px solid #b5b5b5; border-radius: 3px; background: #f3f3f3; }

.status { height: 21px; flex: none; display: flex; align-items: center; white-space: nowrap; letter-spacing: -.35px; border-top: 1px solid #fafafa; line-height: 20px; font-size: 12px; }
.status span { height: 16px; line-height: 16px; border-left: 1px solid #a4a4a4; padding-left: 5px; flex: none; }
.status .t1 { width: 229px; border: 0; padding-left: 10px; }
.t2 { width: 211px; } .t3 { width: 236px; text-align: center; } .t4 { width: 45px; } .t5 { width: 34px; } .t6 { width: 16px; } .t7 { width: 29px; } .t8 { width: 301px; } .t9 { width: 76px; } .t10 { width: 143px; } .t11 { width: 46px; }
.status .t3 { padding: 0 7px 0 5px; border-left: 1px solid #a4a4a4; }
.status .t4 { padding-left: 4px; }
.status .t6 { padding-left: 3px; }
.status .t5 { padding-left: 4px; }
.task { height: 40px; flex: none; background: linear-gradient(90deg, transparent 333px, #bd918f 333px 1032px, transparent 1032px) 0 0 / 100% 16px no-repeat, #532727; display: flex; }
.tk { height: 40px; display: flex; align-items: center; justify-content: center; flex: none; }
.run { width: 58px; margin-right: 4px; height: 38px; margin-top: 1px; background: rgba(255,255,255,.18); border: 1px solid rgba(255,255,255,.3); position: relative; }
.x2 { padding-right: 5px; } .x3 { padding-right: 9px; }
.x2::after, .x3::after { content: ""; position: absolute; right: 3px; top: 0; bottom: 0; border-left: 1px solid rgba(255,255,255,.35); }
.x3::after { width: 4px; border-right: 1px solid rgba(255,255,255,.35); }
.start { width: 52px; padding-right: 2px; }
.ie { width: 64px; } .store { width: 60px; margin-right: 3px; } .chr { margin-right: 2px; } .apps { width: 62px; } .ff { width: 62px; margin-right: 2px; }
.exp { margin-right: 1px; }
.oo { background: rgba(255,255,255,.4); border-color: #fff; }
.wl { font: bold 14px "Open Sans", sans-serif; fill: #fff; text-anchor: middle; }
.wb { font: bold 19px "Liberation Sans", sans-serif; fill: #165e8b; text-anchor: middle; }
.tray { margin: 5px 0 0 175px; }
.clock { width: 82px; margin-left: 2px; text-align: center; color: #fff; font-size: 12px; line-height: 17px; padding-top: 4px; letter-spacing: -.45px; }
```
